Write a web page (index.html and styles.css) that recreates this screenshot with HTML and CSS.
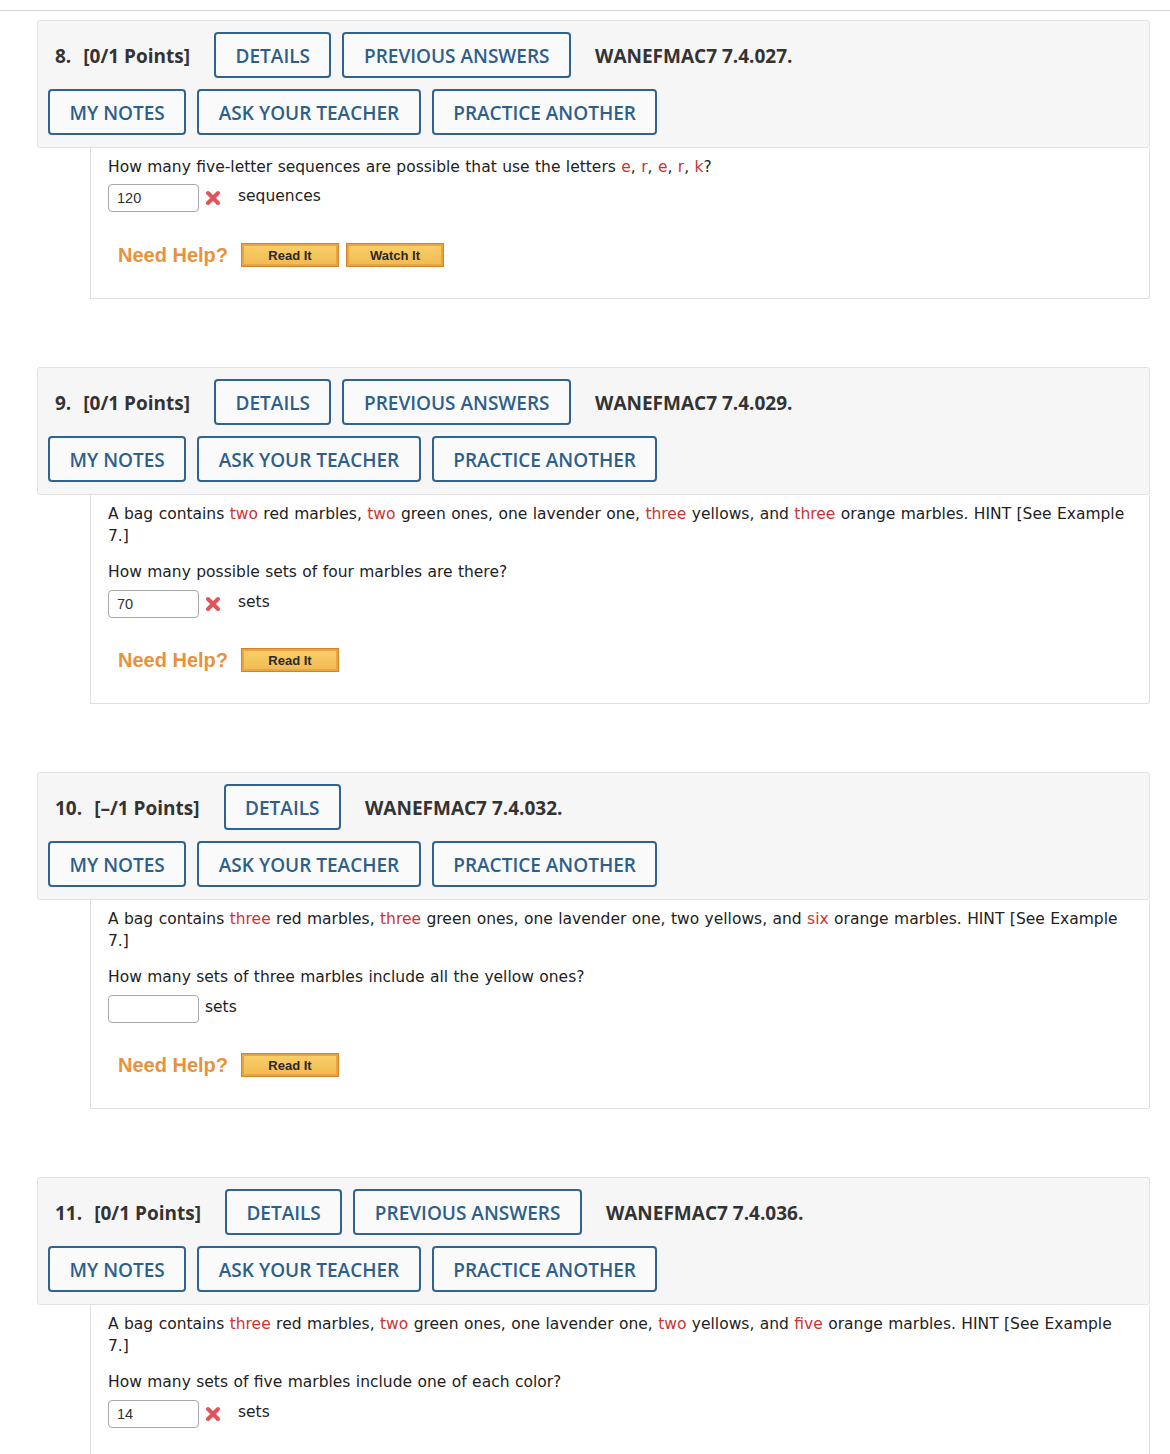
FILE: index.html
```html
<!DOCTYPE html>
<html>
<head>
<meta charset="utf-8">
<link rel="stylesheet" href="styles.css">
</head>
<body>
<div class="topline"></div>
<div class="page">

  <div class="question">
    <div class="qhead">
      <div class="row row1">
        <span class="qnum">8.</span><span class="pts">[0/1 Points]</span>
        <span class="btn">DETAILS</span>
        <span class="btn">PREVIOUS ANSWERS</span>
        <span class="code">WANEFMAC7 7.4.027.</span>
      </div>
      <div class="row">
        <span class="btn">MY NOTES</span>
        <span class="btn">ASK YOUR TEACHER</span>
        <span class="btn">PRACTICE ANOTHER</span>
      </div>
    </div>
    <div class="qbody first-body">
      <p class="txt">How many five-letter sequences are possible that use the letters <span class="red">e</span>, <span class="red">r</span>, <span class="red">e</span>, <span class="red">r</span>, <span class="red">k</span>?</p>
      <div class="answer">
        <span class="inp">120</span>
        <svg class="xmark" width="16" height="16" viewBox="0 0 16 16"><path d="M3 3 L13 13 M13 3 L3 13" stroke="#e2535a" stroke-width="4" stroke-linecap="round"/></svg>
        <span class="unit">sequences</span>
      </div>
      <div class="help">
        <span class="need">Need Help?</span>
        <span class="hbtn">Read It</span>
        <span class="hbtn">Watch It</span>
      </div>
    </div>
  </div>

  <div class="question">
    <div class="qhead">
      <div class="row row1">
        <span class="qnum">9.</span><span class="pts">[0/1 Points]</span>
        <span class="btn">DETAILS</span>
        <span class="btn">PREVIOUS ANSWERS</span>
        <span class="code">WANEFMAC7 7.4.029.</span>
      </div>
      <div class="row">
        <span class="btn">MY NOTES</span>
        <span class="btn">ASK YOUR TEACHER</span>
        <span class="btn">PRACTICE ANOTHER</span>
      </div>
    </div>
    <div class="qbody">
      <p class="txt">A bag contains <span class="red">two</span> red marbles, <span class="red">two</span> green ones, one lavender one, <span class="red">three</span> yellows, and <span class="red">three</span> orange marbles. HINT [See Example 7.]</p>
      <p class="txt q2">How many possible sets of four marbles are there?</p>
      <div class="answer">
        <span class="inp">70</span>
        <svg class="xmark" width="16" height="16" viewBox="0 0 16 16"><path d="M3 3 L13 13 M13 3 L3 13" stroke="#e2535a" stroke-width="4" stroke-linecap="round"/></svg>
        <span class="unit">sets</span>
      </div>
      <div class="help">
        <span class="need">Need Help?</span>
        <span class="hbtn">Read It</span>
      </div>
    </div>
  </div>

  <div class="question">
    <div class="qhead">
      <div class="row row1">
        <span class="qnum">10.</span><span class="pts">[–/1 Points]</span>
        <span class="btn">DETAILS</span>
        <span class="code">WANEFMAC7 7.4.032.</span>
      </div>
      <div class="row">
        <span class="btn">MY NOTES</span>
        <span class="btn">ASK YOUR TEACHER</span>
        <span class="btn">PRACTICE ANOTHER</span>
      </div>
    </div>
    <div class="qbody">
      <p class="txt">A bag contains <span class="red">three</span> red marbles, <span class="red">three</span> green ones, one lavender one, two yellows, and <span class="red">six</span> orange marbles. HINT [See Example 7.]</p>
      <p class="txt q2">How many sets of three marbles include all the yellow ones?</p>
      <div class="answer">
        <span class="inp"></span>
        <span class="unit tight">sets</span>
      </div>
      <div class="help">
        <span class="need">Need Help?</span>
        <span class="hbtn">Read It</span>
      </div>
    </div>
  </div>

  <div class="question">
    <div class="qhead">
      <div class="row row1">
        <span class="qnum">11.</span><span class="pts">[0/1 Points]</span>
        <span class="btn">DETAILS</span>
        <span class="btn">PREVIOUS ANSWERS</span>
        <span class="code">WANEFMAC7 7.4.036.</span>
      </div>
      <div class="row">
        <span class="btn">MY NOTES</span>
        <span class="btn">ASK YOUR TEACHER</span>
        <span class="btn">PRACTICE ANOTHER</span>
      </div>
    </div>
    <div class="qbody">
      <p class="txt">A bag contains <span class="red">three</span> red marbles, <span class="red">two</span> green ones, one lavender one, <span class="red">two</span> yellows, and <span class="red">five</span> orange marbles. HINT [See Example 7.]</p>
      <p class="txt q2">How many sets of five marbles include one of each color?</p>
      <div class="answer">
        <span class="inp">14</span>
        <svg class="xmark" width="16" height="16" viewBox="0 0 16 16"><path d="M3 3 L13 13 M13 3 L3 13" stroke="#e2535a" stroke-width="4" stroke-linecap="round"/></svg>
        <span class="unit">sets</span>
      </div>
      <div class="help">
        <span class="need">Need Help?</span>
        <span class="hbtn">Read It</span>
      </div>
    </div>
  </div>

</div>
</body>
</html>
```
FILE: styles.css
```css
html, body {
  margin: 0;
  padding: 0;
  background: #ffffff;
}
body {
  font-family: "DejaVu Sans", Verdana, sans-serif;
  color: #222;
  overflow: hidden;
}
.topline {
  margin-top: 10px;
  border-top: 1px solid #d3d3d3;
}
.page {
  padding: 9px 20px 0 37px;
}
.question {
  width: 1113px;
  margin-bottom: 68px;
}
.qhead {
  background: #f6f6f6;
  border: 1px solid #e2e2e2;
  border-radius: 3px;
  padding: 11px 10px 12px 10px;
  display: flex;
  flex-direction: column;
  gap: 11px;
}
.row {
  display: flex;
  align-items: center;
  gap: 11px;
}
.row1 {
  padding-left: 7px;
}
.qnum, .pts, .code {
  font-family: "Open Sans", sans-serif;
  font-weight: 700;
  font-size: 19px;
  color: #333;
  padding-top: 2px;
}
.qnum {
  margin-right: 1px;
}
.pts {
  margin-right: 13px;
}
.code {
  margin-left: 13px;
}
.btn {
  box-sizing: border-box;
  height: 46px;
  display: inline-flex;
  align-items: center;
  padding: 1px 19.5px 0 19.5px;
  border: 2px solid #2f6492;
  border-radius: 4px;
  font-family: "Open Sans", sans-serif;
  font-weight: 600;
  font-size: 19px;
  color: #2e5f8b;
  background: #fafafa;
}
.qbody {
  margin-left: 53px;
  border: 1px solid #e0e0e0;
  border-top: none;
  border-radius: 0 0 3px 0;
  padding: 8px 17px 31px 17px;
}
.qbody.first-body {
  padding-top: 8px;
  padding-bottom: 31px;
}
.txt {
  margin: 0;
  font-size: 15.5px;
  line-height: 22px;
  word-spacing: 0.5px;
  color: #222;
}
.q2 {
  margin-top: 14px;
}
.red {
  color: #cc3333;
}
.answer {
  margin-top: 7px;
  display: flex;
  align-items: center;
  height: 28px;
}
.first-body .answer {
  margin-top: 6px;
}
.first-body .help {
  margin-top: 31px;
}
.inp {
  box-sizing: border-box;
  width: 91px;
  height: 28px;
  border: 1px solid #a8a8a8;
  border-radius: 4px;
  padding-left: 8px;
  font-family: "Liberation Sans", Arial, sans-serif;
  font-size: 14.5px;
  line-height: 26px;
  color: #333;
  background: #fff;
}
.xmark {
  margin-left: 6px;
}
.unit {
  margin-left: 17px;
  font-size: 15.5px;
  color: #222;
  position: relative;
  top: -2px;
}
.unit.tight {
  margin-left: 6px;
}
.help {
  margin-top: 30px;
  padding-left: 10px;
  display: flex;
  align-items: center;
  height: 24px;
}
.need {
  font-family: "Liberation Sans", Arial, sans-serif;
  font-weight: 700;
  font-size: 20px;
  color: #e8923b;
  margin-right: 13px;
}
.hbtn {
  box-sizing: border-box;
  width: 98px;
  height: 24px;
  display: inline-flex;
  align-items: center;
  justify-content: center;
  border: 1px solid #cf842c;
  box-shadow: inset 0 0 0 2px #eaa444;
  background: linear-gradient(#f9d06c, #f2b94f);
  font-family: "Liberation Sans", Arial, sans-serif;
  font-weight: 700;
  font-size: 13px;
  color: #2a2a2a;
  margin-right: 7px;
}
```
